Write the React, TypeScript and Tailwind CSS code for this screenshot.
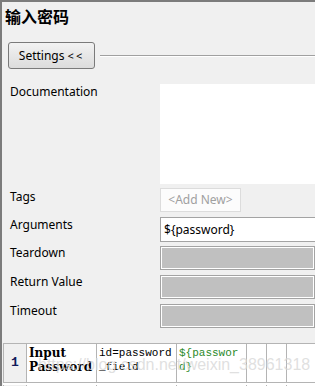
import React from 'react';

const ui = { fontFamily: '"Noto Sans", "Open Sans", sans-serif' };
const mono = { fontFamily: '"Liberation Mono", monospace' };

const rows = [
  { label: 'Teardown' },
  { label: 'Return Value' },
  { label: 'Timeout' },
];

function GrayField() {
  return (
    <div className="h-[24px] flex-1 border border-[#a3a3a3] bg-[#c0c0c0] shadow-[inset_1px_1px_0_#ffffff,inset_-1px_-1px_0_#ffffff]" />
  );
}

export default function App() {
  return (
    <div
      className="relative w-[315px] h-[386px] overflow-hidden bg-[#f0f0f0] border-t-2 border-l-2 border-[#7c7c7c] text-black"
      style={ui}
    >
      <h1
        className="pl-[3px] pt-[4px] h-[40px] text-[16px] font-bold leading-[20px]"
        style={{ fontFamily: '"Noto Sans CJK SC", sans-serif' }}
      >
        输入密码
      </h1>

      {/* settings toggle */}
      <div className="flex items-center pl-[6px] h-[27px]">
        <button className="w-[87px] h-[27px] rounded-[3px] border border-[#7a7a7a] bg-gradient-to-b from-[#f2f2f2] to-[#dcdcdc] text-[12px] leading-none text-black">
          Settings <span className="tracking-[2px] text-[11px]">&lt;&lt;</span>
        </button>
        <div className="flex-1 ml-[5px] h-[2px] border-t border-[#a0a0a0] border-b border-b-white" />
      </div>

      {/* form */}
      <div className="mt-[15px] flex flex-col text-[12px]">
        <div className="flex h-[100px]">
          <div className="w-[158px] pl-[8px] -mt-[1px]">Documentation</div>
          <div className="flex-1 bg-white" />
        </div>

        <div className="flex items-center mt-[4px] h-[24px]">
          <div className="w-[158px] pl-[8px] -mt-[6px]">Tags</div>
          <div className="w-[81px] h-[24px] flex items-center justify-center border border-[#dcdcdc] bg-[#fcfcfc] text-[#a0a0a0]">
            &lt;Add New&gt;
          </div>
        </div>

        <div className="flex items-center mt-[5px] h-[25px]">
          <div className="w-[158px] pl-[8px] -mt-[10px]">Arguments</div>
          <div className="flex-1 h-[25px] flex items-center pl-[3px] border border-[#a3a3a3] border-r-0 bg-white">
            ${'{'}password{'}'}
          </div>
        </div>

        {rows.map((r, i) => (
          <div key={r.label} className={`flex items-center h-[24px] ${i === 0 ? 'mt-[4px]' : 'mt-[5px]'}`}>
            <div className="w-[158px] pl-[8px] -mt-[10px]">{r.label}</div>
            <GrayField />
          </div>
        ))}
      </div>

      {/* steps table */}
      <div className="absolute left-0 right-0 top-[341px] bottom-0 pl-[1px]">
        <div className="grid grid-cols-[24px_70px_80px_70px_20px_20px_1fr] h-full border-t border-[#b4b4b4] bg-white">
          <div className="h-[39px] flex items-center justify-center bg-[#f0f0f0] border-r border-b border-l border-[#b4b4b4] text-[13px] font-bold text-[#101a5a]" style={mono}>
            1
          </div>
          <div className="h-[39px] px-[2px] pt-[2px] border-r border-b border-[#b4b4b4] text-[12px] font-bold leading-[14px]" style={{ fontFamily: '"DejaVu Serif", serif' }}>
            Input<br />Password
          </div>
          <div className="h-[39px] px-[2px] pt-[2px] border-r border-b border-[#b4b4b4] text-[11px] leading-[14px] break-all" style={mono}>
            id=password _field
          </div>
          <div className="h-[39px] px-[2px] pt-[2px] border-r border-b border-[#b4b4b4] text-[11px] leading-[14px] text-[#2a8a2a] break-all" style={mono}>
            ${'{'}passwor d{'}'}
          </div>
          <div className="h-[39px] border-r border-b border-[#b4b4b4]" />
          <div className="h-[39px] border-r border-b border-[#b4b4b4]" />
          <div className="h-[39px] border-b border-[#b4b4b4]" />
          <div className="bg-[#f0f0f0] border-r border-l border-[#b4b4b4]" />
          <div className="border-r border-[#b4b4b4]" />
          <div className="border-r border-[#b4b4b4]" />
          <div className="border-r border-[#b4b4b4]" />
          <div className="border-r border-[#b4b4b4]" />
          <div className="border-r border-[#b4b4b4]" />
          <div />
        </div>
        <div
          className="absolute left-[36px] top-[10px] text-[16px] text-[#d8d8d8]/80 pointer-events-none whitespace-nowrap"
          style={{ fontFamily: '"Liberation Sans", sans-serif' }}
        >
          https://blog.csdn.net/weixin_38961318
        </div>
      </div>
    </div>
  );
}
